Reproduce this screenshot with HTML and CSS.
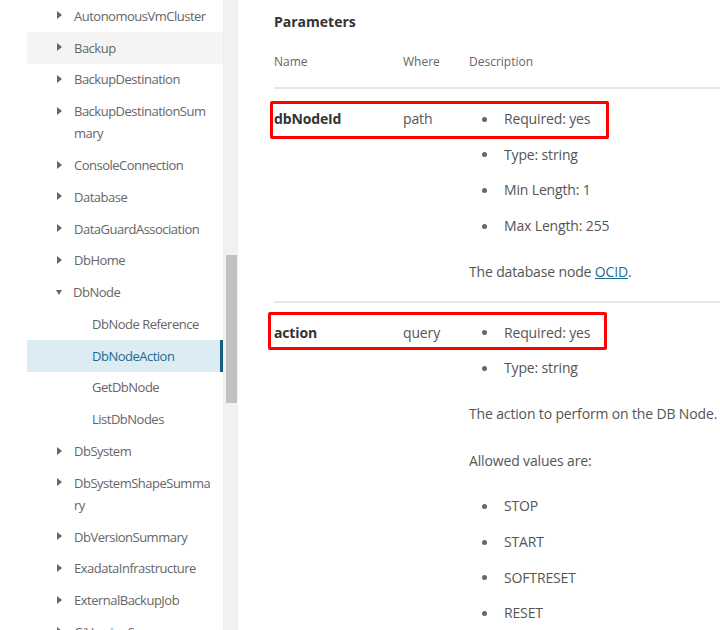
FILE: index.html
```html
<!DOCTYPE html>
<html lang="en">
<head>
    <meta charset="UTF-8">
    <meta name="viewport" content="width=device-width, initial-scale=1.0">
    <title>DbNodeAction</title>
    <link rel="stylesheet" href="styles.css">
</head>
<body>
    <div class="page">
        <!-- navigation tree -->
        <nav class="sidebar">
            <ul class="tree">
                <li class="tree-item"><span class="caret"></span><span class="label">AutonomousVmCluster</span></li>
                <li class="tree-item is-hover"><span class="caret"></span><span class="label">Backup</span></li>
                <li class="tree-item"><span class="caret"></span><span class="label">BackupDestination</span></li>
                <li class="tree-item"><span class="caret"></span><span class="label">BackupDestinationSum<wbr>mary</span></li>
                <li class="tree-item"><span class="caret"></span><span class="label">ConsoleConnection</span></li>
                <li class="tree-item"><span class="caret"></span><span class="label">Database</span></li>
                <li class="tree-item"><span class="caret"></span><span class="label">DataGuardAssociation</span></li>
                <li class="tree-item"><span class="caret"></span><span class="label">DbHome</span></li>
                <li class="tree-item"><span class="caret caret-open"></span><span class="label">DbNode</span></li>
                <li class="tree-item sub-item"><span class="label">DbNode Reference</span></li>
                <li class="tree-item sub-item is-active"><span class="label">DbNodeAction</span></li>
                <li class="tree-item sub-item"><span class="label">GetDbNode</span></li>
                <li class="tree-item sub-item"><span class="label">ListDbNodes</span></li>
                <li class="tree-item"><span class="caret"></span><span class="label">DbSystem</span></li>
                <li class="tree-item"><span class="caret"></span><span class="label">DbSystemShapeSumma<wbr>ry</span></li>
                <li class="tree-item"><span class="caret"></span><span class="label">DbVersionSummary</span></li>
                <li class="tree-item"><span class="caret"></span><span class="label">ExadataInfrastructure</span></li>
                <li class="tree-item"><span class="caret"></span><span class="label">ExternalBackupJob</span></li>
                <li class="tree-item"><span class="caret"></span><span class="label">GiVersionSummary</span></li>
            </ul>
        </nav>

        <div class="scrollbar"><div class="thumb"></div></div>

        <!-- parameters table -->
        <main class="content">
            <h2 class="section-title">Parameters</h2>

            <div class="params-head">
                <span>Name</span>
                <span>Where</span>
                <span>Description</span>
            </div>

            <div class="param">
                <div class="param-name">dbNodeId</div>
                <div class="param-where">path</div>
                <div class="param-desc">
                    <ul class="facts">
                        <li>Required: yes</li>
                        <li>Type: string</li>
                        <li>Min Length: 1</li>
                        <li>Max Length: 255</li>
                    </ul>
                    <p>The database node <a href="#">OCID</a>.</p>
                </div>
                <span class="mark mark-first"></span>
            </div>

            <div class="param">
                <div class="param-name">action</div>
                <div class="param-where">query</div>
                <div class="param-desc">
                    <ul class="facts">
                        <li>Required: yes</li>
                        <li>Type: string</li>
                    </ul>
                    <p>The action to perform on the DB Node.</p>
                    <p>Allowed values are:</p>
                    <ul class="facts">
                        <li>STOP</li>
                        <li>START</li>
                        <li>SOFTRESET</li>
                        <li>RESET</li>
                    </ul>
                </div>
                <span class="mark mark-second"></span>
            </div>
        </main>
    </div>
</body>
</html>
```

FILE: styles.css
```css
:root {
    --text-color: #555;
    --muted-color: #666;
    --heading-color: #333;
    --link-color: #1f6a8c;
    --active-bg: #dcecf3;
    --active-bar: #135d7e;
    --hover-bg: #f4f4f4;
    --rule-color: #e6e9ec;
}

* {
    box-sizing: border-box;
    margin: 0;
    padding: 0;
}

body {
    background: #fff;
    color: var(--text-color);
    font-family: 'Open Sans', 'Noto Sans', Arial, sans-serif;
    font-size: 14px;
    overflow: hidden;
}

.page {
    display: flex;
    width: 720px;
    height: 630px;
    overflow: hidden;
}

/* sidebar */
.sidebar {
    flex: 0 0 223px;
    min-width: 0;
    padding-left: 27px;
    overflow: hidden;
}

.tree {
    list-style: none;
}

.tree-item {
    display: flex;
    align-items: flex-start;
    padding: 4.9px 12px 4.9px 30px;
    font-size: 13px;
    letter-spacing: -0.5px;
    line-height: 22px;
    color: var(--muted-color);
}

.tree-item .label {
    min-width: 0;
}

.caret {
    flex: 0 0 auto;
    width: 0;
    height: 0;
    margin: 6.5px 12px 0 0;
    border-left: 5px solid #666;
    border-top: 4.5px solid transparent;
    border-bottom: 4.5px solid transparent;
}

.caret-open {
    margin: 9px 11px 0 -1px;
    border-top: 5px solid #666;
    border-left: 3.5px solid transparent;
    border-right: 3.5px solid transparent;
    border-bottom: 0;
}

.sub-item {
    padding-left: 65px;
}

.is-hover {
    background: var(--hover-bg);
}

.is-active {
    background: var(--active-bg);
    color: var(--link-color);
    border-right: 3px solid var(--active-bar);
}

/* fake scrollbar */
.scrollbar {
    flex: 0 0 15px;
    background: #f1f1f1;
    border-left: 1px solid #ececec;
}

.thumb {
    height: 148px;
    margin: 255px 1px 0 1.5px;
    background: #c1c1c1;
}

/* main column */
.content {
    flex: 1;
    padding: 10px 0 0 36px;
    min-width: 0;
}

.section-title {
    font-size: 14px;
    font-weight: 700;
    line-height: 24px;
    color: var(--heading-color);
}

.params-head,
.param {
    display: grid;
    grid-template-columns: 129px 66px 1fr;
}

.params-head {
    margin-top: 18px;
    padding-bottom: 15px;
    border-bottom: 2px solid var(--rule-color);
    font-size: 12px;
    line-height: 20px;
    color: var(--muted-color);
}

.param {
    position: relative;
    padding: 12px 0 18px;
    border-bottom: 2px solid var(--rule-color);
    line-height: 21.7px;
    letter-spacing: -0.15px;
}

.param-name {
    padding-top: 7px;
    font-weight: 700;
    color: var(--heading-color);
}

.param-where {
    padding-top: 7px;
}

.param-desc {
    white-space: nowrap;
}

.facts {
    list-style: none;
}

p + .facts {
    margin-top: 17px;
}

.facts li {
    display: flex;
    padding: 7px 0;
}

.facts li::before {
    content: "";
    flex: 0 0 5px;
    height: 5px;
    margin: 8.5px 17px 0 13px;
    border-radius: 50%;
    background: #666;
}

.param-desc p {
    margin-top: 17px;
}

.param-desc p + p {
    margin-top: 25px;
}

.param-desc a {
    color: var(--link-color);
}

/* red highlight boxes */
.mark {
    position: absolute;
    width: 339px;
    height: 38px;
    border: 3px solid #f00;
    border-radius: 2px;
}

.mark-first {
    top: 12px;
    left: -4px;
}

.mark-second {
    top: 9px;
    left: -6px;
}
```
